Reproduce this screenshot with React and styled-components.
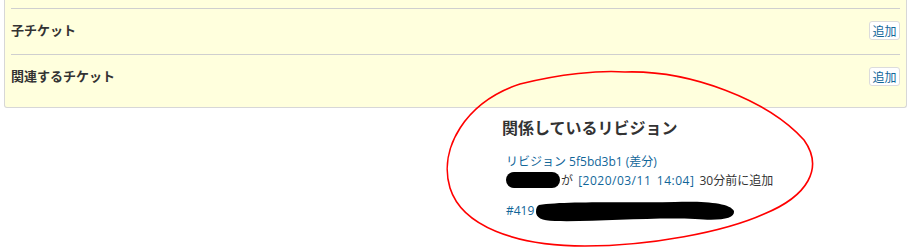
import React from "react";
import styled, { createGlobalStyle } from "styled-components";

const Global = createGlobalStyle`
  html, body { margin: 0; padding: 0; background: #fff; }
  body {
    font-family: "Noto Sans", "Noto Sans CJK JP", sans-serif;
    color: #333;
    width: 917px;
    height: 248px;
    overflow: hidden;
  }
`;

const Page = styled.div`
  position: relative;
  width: 917px;
  height: 248px;
  padding: 0 10px 0 4px;
  box-sizing: border-box;
`;

const IssuePanel = styled.div`
  width: 903px;
  box-sizing: border-box;
  background: #ffffdd;
  border: 1px solid #d7d7d7;
  border-top: none;
  border-radius: 0 0 3px 3px;
  padding: 8px 6px 7px 6px;
`;

const Row = styled.div`
  display: flex;
  align-items: center;
  justify-content: space-between;
  height: 45px;
  border-top: 1px solid #cfcfcf;
`;

const Label = styled.strong`
  font-size: 13px;
  font-weight: bold;
  color: #333;
  margin-top: -4px;
`;

const AddButton = styled.a`
  display: flex;
  align-items: center;
  justify-content: center;
  box-sizing: border-box;
  width: 31px;
  height: 19px;
  border: 1px solid #dcdcdc;
  border-radius: 3px;
  background: #fff;
  color: #169;
  font-size: 12px;
  text-decoration: none;
  margin-top: -2px;
`;

const Revisions = styled.div`
  width: 405px;
  margin-left: 498px;
  padding-top: 10px;
`;

const Heading = styled.h3`
  margin: 0 0 14px 0;
  font-size: 16px;
  line-height: 20px;
  font-weight: bold;
  color: #333;
`;

const Changeset = styled.div`
  padding-left: 4px;
  font-family: "Open Sans", "Noto Sans CJK JP", sans-serif;
  font-size: 12px;
  line-height: 19px;
  color: #333;
`;

const Para = styled.p`
  margin: 0 0 ${(p) => p.$gap || 0}px 0;
  white-space: nowrap;
  word-spacing: ${(p) => p.$wordGap || 0}px;
`;

const Link = styled.a`
  color: #169;
  text-decoration: none;
  letter-spacing: ${(p) => p.$track || 0}px;
`;

const Redact = styled.span`
  display: inline-block;
  vertical-align: middle;
  width: ${(p) => p.$w}px;
  height: ${(p) => p.$h}px;
  background: #000;
  border-radius: ${(p) => p.$h / 2}px;
  margin-top: -3px;
  margin-right: 1px;
`;

const BlobSvg = styled.svg`
  display: inline-block;
  vertical-align: middle;
  margin-left: -2px;
  margin-top: -2px;
`;

const Overlay = styled.svg`
  position: absolute;
  left: 0;
  top: 0;
  width: 917px;
  height: 248px;
  pointer-events: none;
`;

export default function App() {
  return (
    <>
      <Global />
      <Page>
        <IssuePanel>
          <Row>
            <Label>子チケット</Label>
            <AddButton href="#">追加</AddButton>
          </Row>
          <Row>
            <Label>関連するチケット</Label>
            <AddButton href="#">追加</AddButton>
          </Row>
        </IssuePanel>
        <Revisions>
          <Heading>関係しているリビジョン</Heading>
          <Changeset>
            <Para>
              <Link href="#">リビジョン 5f5bd3b1</Link> <Link href="#">(差分)</Link>
            </Para>
            <Para $gap={11} $wordGap={2}>
              <Redact $w={54} $h={16} />が <Link href="#" $track={0.5}>[2020/03/11 14:04]</Link> 30分前に追加
            </Para>
            <Para>
              <Link href="#">#419</Link>{" "}
              <BlobSvg width="202" height="24" viewBox="0 0 202 24">
                <path
                  d="M4 6 C 30 2, 90 4, 140 3 C 170 2, 195 4, 199 12 C 200 20, 185 22, 160 20 C 120 18, 60 23, 20 22 C 6 22, 1 18, 1 13 C 1 9, 2 7, 4 6 Z"
                  fill="#000"
                />
              </BlobSvg>
            </Para>
          </Changeset>
        </Revisions>
        <Overlay viewBox="0 0 917 248">
          <path
            d="M 625 72 C 690 70, 768 100, 804 140 C 824 168, 808 196, 764 214 C 724 232, 650 246, 585 246 C 515 246, 462 226, 450 188 C 438 148, 466 102, 520 84 C 560 74, 600 70, 625 72 Z"
            fill="none"
            stroke="#f00"
            strokeWidth="1.6"
          />
        </Overlay>
      </Page>
    </>
  );
}
